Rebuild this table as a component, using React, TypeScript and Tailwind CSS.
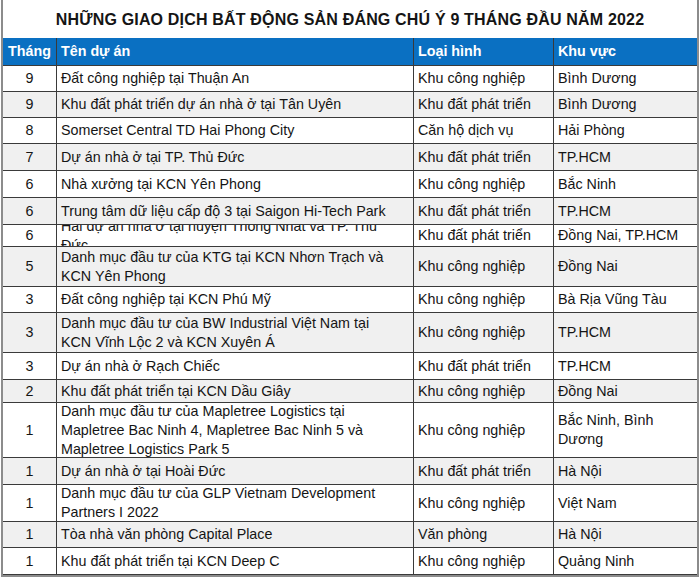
import React from "react";

type Row = { m: string; name: string; type: string; area: string; h: string };

const rows: Row[] = [
  { m: "9", name: "Đất công nghiệp tại Thuận An", type: "Khu công nghiệp", area: "Bình Dương", h: "h-[26px]" },
  { m: "9", name: "Khu đất phát triển dự án nhà ở tại Tân Uyên", type: "Khu đất phát triển", area: "Bình Dương", h: "h-[26px]" },
  { m: "8", name: "Somerset Central TD Hai Phong City", type: "Căn hộ dịch vụ", area: "Hải Phòng", h: "h-[26px]" },
  { m: "7", name: "Dự án nhà ở tại TP. Thủ Đức", type: "Khu đất phát triển", area: "TP.HCM", h: "h-[27px]" },
  { m: "6", name: "Nhà xưởng tại KCN Yên Phong", type: "Khu công nghiệp", area: "Bắc Ninh", h: "h-[27px]" },
  { m: "6", name: "Trung tâm dữ liệu cấp độ 3 tại Saigon Hi-Tech Park", type: "Khu đất phát triển", area: "TP.HCM", h: "h-[27px]" },
  { m: "6", name: "Hai dự án nhà ở tại huyện Thống Nhất và TP. Thủ Đức", type: "Khu đất phát triển", area: "Đồng Nai, TP.HCM", h: "h-[22px]" },
  { m: "5", name: "Danh mục đầu tư của KTG tại KCN Nhơn Trạch và KCN Yên Phong", type: "Khu công nghiệp", area: "Đồng Nai", h: "h-[40px]" },
  { m: "3", name: "Đất công nghiệp tại KCN Phú Mỹ", type: "Khu công nghiệp", area: "Bà Rịa Vũng Tàu", h: "h-[26px]" },
  { m: "3", name: "Danh mục đầu tư của BW Industrial Việt Nam tại KCN Vĩnh Lộc 2 và KCN Xuyên Á", type: "Khu công nghiệp", area: "TP.HCM", h: "h-[40px]" },
  { m: "3", name: "Dự án nhà ở Rạch Chiếc", type: "Khu đất phát triển", area: "TP.HCM", h: "h-[27px]" },
  { m: "2", name: "Khu đất phát triển tại KCN Dầu Giây", type: "Khu công nghiệp", area: "Đồng Nai", h: "h-[23px]" },
  { m: "1", name: "Danh mục đầu tư của Mapletree Logistics tại Mapletree Bac Ninh 4, Mapletree Bac Ninh 5 và Mapletree Logistics Park 5", type: "Khu công nghiệp", area: "Bắc Ninh, Bình Dương", h: "h-[55px]" },
  { m: "1", name: "Dự án nhà ở tại Hoài Đức", type: "Khu đất phát triển", area: "Hà Nội", h: "h-[27px]" },
  { m: "1", name: "Danh mục đầu tư của GLP Vietnam Development Partners I 2022", type: "Khu công nghiệp", area: "Việt Nam", h: "h-[37px]" },
  { m: "1", name: "Tòa nhà văn phòng Capital Place", type: "Văn phòng", area: "Hà Nội", h: "h-[26px]" },
  { m: "1", name: "Khu đất phát triển tại KCN Deep C", type: "Khu công nghiệp", area: "Quảng Ninh", h: "h-[27px]" },
];

export default function App() {
  return (
    <div
      className="w-[700px] h-[577px] bg-white text-[#151515] overflow-hidden"
      style={{ fontFamily: '"Liberation Sans", Arial, sans-serif' }}
    >
      <div className="ml-[1px] w-[698px] border-l-2 border-r-2 border-b-2 border-[#8c8c8c]">
        <div className="h-[38px] flex items-center justify-center text-[16px] font-bold tracking-[0.18px] pt-[1px]">
          NHỮNG GIAO DỊCH BẤT ĐỘNG SẢN ĐÁNG CHÚ Ý 9 THÁNG ĐẦU NĂM 2022
        </div>
        <div className="h-[28px] flex bg-[#0a70c2] text-white font-bold text-[14.3px] border-b border-[#3a3a3a]">
          <div className="w-[54px] shrink-0 flex items-center justify-center border-r border-[#3a3a3a]">Tháng</div>
          <div className="w-[357px] shrink-0 flex items-center pl-[4px] border-r border-[#3a3a3a]">Tên dự án</div>
          <div className="w-[140px] shrink-0 flex items-center pl-[4px] border-r border-[#3a3a3a]">Loại hình</div>
          <div className="flex-1 flex items-center pl-[4px]">Khu vực</div>
        </div>
        {rows.map((r, i) => (
          <div
            key={i}
            className={`${r.h} flex text-[14.3px] leading-[19px] border-b border-[#3a3a3a] ${i % 2 === 1 ? "bg-[#f0f0f0]" : "bg-white"}`}
          >
            <div className="w-[54px] shrink-0 flex items-center justify-center border-r border-[#3a3a3a]">{r.m}</div>
            <div className="w-[357px] shrink-0 flex items-center pl-[4px] pr-[11px] border-r border-[#3a3a3a] overflow-hidden">
              <span>{r.name}</span>
            </div>
            <div className="w-[140px] shrink-0 flex items-center pl-[4px] border-r border-[#3a3a3a] overflow-hidden">{r.type}</div>
            <div className="flex-1 flex items-center pl-[4px] pr-[8px] overflow-hidden">{r.area}</div>
          </div>
        ))}
      </div>
    </div>
  );
}
